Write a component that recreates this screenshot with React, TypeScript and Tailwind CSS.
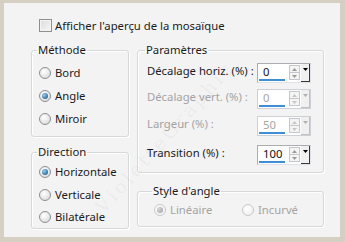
import { type FC, type ReactNode } from "react";

const FONT = "font-['Noto_Sans','Liberation_Sans',sans-serif]";

/** Win7-style radio button */
const Radio: FC<{ checked?: boolean; disabled?: boolean }> = ({ checked, disabled }) => (
  <span
    className={
      "flex h-[12px] w-[12px] shrink-0 items-center justify-center rounded-full border " +
      (disabled
        ? "border-[#c9c9c9] bg-[radial-gradient(circle_at_40%_35%,#ffffff,#ececec)]"
        : "border-[#8c8f91] bg-[radial-gradient(circle_at_40%_35%,#ffffff,#d2d4d6)]")
    }
  >
    {checked && (
      <span
        className={
          "h-[6px] w-[6px] rounded-full " +
          (disabled
            ? "bg-[radial-gradient(circle_at_35%_35%,#d8d8d8,#9a9a9a)]"
            : "bg-[radial-gradient(circle_at_35%_35%,#8fd0f5,#0d4877)]")
        }
      />
    )}
  </span>
);

const RadioRow: FC<{ label: string; checked?: boolean; disabled?: boolean; className?: string }> = ({
  label,
  checked,
  disabled,
  className = "",
}) => (
  <div className={"flex items-center gap-[4px] " + className}>
    <Radio checked={checked} disabled={disabled} />
    <span className={"whitespace-nowrap " + (disabled ? "text-[#a4a4a4]" : "text-[#1b1b1b]")}>{label}</span>
  </div>
);

const Group: FC<{ title: string; className?: string; children: ReactNode }> = ({ title, className = "", children }) => (
  <fieldset
    className={
      "rounded-[3px] border border-[#d5d9dc] shadow-[inset_1px_1px_0_#ffffff,1px_1px_0_#ffffff] " + className
    }
  >
    <legend className="-ml-[2px] px-[1px] leading-[16px] text-[#1b1b1b]">{title}</legend>
    {children}
  </fieldset>
);

/** numeric field with spin arrows, dropdown button and the blue slider bar */
const SpinField: FC<{ value: string; disabled?: boolean }> = ({ value, disabled }) => (
  <div
    className={
      "flex h-[20px] w-[54px] shrink-0 border bg-white " +
      (disabled ? "border-[#cdd0d4]" : "border-[#abadb3] border-b-[#dfe3e8] border-r-[#dfe3e8]")
    }
  >
    <div className="flex w-[30px] flex-col justify-between pb-[1px] pl-[1px]">
      <span className={"pl-[4px] pt-[1px] leading-[14px] " + (disabled ? "text-[#a4a4a4]" : "text-[#111]")}>{value}</span>
      <span className="h-[3px] w-[26px] bg-[#3d8ed6]" />
    </div>
    <div className="ml-[1px] mt-[1px] flex h-[15px] w-[11px] flex-col border border-[#c4c7cb] bg-[#f4f4f4]">
      <div className="flex flex-1 items-center justify-center border-b border-[#c4c7cb]">
        <svg width="5" height="3" viewBox="0 0 5 3">
          <path d="M0 3L2.5 0L5 3Z" fill={disabled ? "#c8c8c8" : "#9a9a9a"} />
        </svg>
      </div>
      <div className="flex flex-1 items-center justify-center">
        <svg width="5" height="3" viewBox="0 0 5 3">
          <path d="M0 0L2.5 3L5 0Z" fill={disabled ? "#c8c8c8" : "#9a9a9a"} />
        </svg>
      </div>
    </div>
    <div
      className={
        "ml-[1px] flex h-[18px] w-[9px] justify-center border-b border-r bg-[#f0f0f0] pt-[4px] " +
        (disabled ? "border-[#c0c0c0]" : "border-[#3a3a3a]")
      }
    >
      <svg width="5" height="3" viewBox="0 0 5 3">
        <path d="M0 0L2.5 3L5 0Z" fill={disabled ? "#b0b0b0" : "#000"} />
      </svg>
    </div>
  </div>
);

const ParamRow: FC<{ label: string; value: string; disabled?: boolean; className?: string }> = ({
  label,
  value,
  disabled,
  className = "",
}) => (
  <div className={"flex h-[20px] items-center justify-between " + className}>
    <span className={"-mt-[5px] whitespace-nowrap " + (disabled ? "text-[#a4a4a4]" : "text-[#1b1b1b]")}>{label}</span>
    <SpinField value={value} disabled={disabled} />
  </div>
);

export default function App() {
  return (
    <div
      className={
        "h-[242px] w-[345px] bg-[#d6cfc4] pb-[5px] pl-[4px] pr-[5px] pt-[3px] text-[11.3px] leading-[16px] " + FONT
      }
    >
      <div className="relative h-full w-full overflow-hidden bg-[#f3f3f3]">
        {/* checkbox */}
        <div className="ml-[35px] mt-[16px] flex h-[13px] items-center gap-[3px]">
          <span className="h-[13px] w-[13px] border border-[#8e8f8f] bg-[linear-gradient(135deg,#dcdcdc,#f6f6f6)] shadow-[inset_0_0_0_1px_#f4f4f4]" />
          <span className="whitespace-nowrap text-[#1b1b1b]">Afficher l'aperçu de la mosaïque</span>
        </div>

        <div className="ml-[27px] mt-[10px] flex gap-[8px]">
          {/* left column */}
          <div className="flex w-[98px] flex-col">
            <Group title="Méthode" className="pb-[6px] pl-[7px] pt-[3px]">
              <RadioRow label="Bord" className="h-[23px]" />
              <RadioRow label="Angle" checked className="h-[23px]" />
              <RadioRow label="Miroir" className="h-[23px]" />
            </Group>
            <Group title="Direction" className="mt-[7px] pb-0 pl-[7px]">
              <RadioRow label="Horizontale" checked className="h-[23px]" />
              <RadioRow label="Verticale" className="h-[23px]" />
              <RadioRow label="Bilatérale" className="h-[22px]" />
            </Group>
          </div>

          {/* right column */}
          <div className="flex w-[187px] flex-col">
            <Group title="Paramètres" className="pb-[7px] pl-[9px] pr-[12px] pt-[5px]">
              <ParamRow label="Décalage horiz. (%) :" value="0" />
              <ParamRow label="Décalage vert. (%) :" value="0" disabled className="mt-[6px]" />
              <ParamRow label="Largeur (%) :" value="50" disabled className="mt-[7px]" />
              <ParamRow label="Transition (%) :" value="100" className="mt-[9px]" />
            </Group>
            <Group title="Style d'angle" className="mt-[10px] flex pb-[6px] pl-[16px] pt-[1px]">
              <RadioRow label="Linéaire" checked disabled className="h-[20px] w-[88px]" />
              <RadioRow label="Incurvé" disabled className="h-[20px]" />
            </Group>
          </div>
        </div>

        {/* watermark */}
        <span className="pointer-events-none absolute left-[62px] top-[126px] rotate-[-48deg] whitespace-nowrap font-['DejaVu_Serif',serif] text-[19px] tracking-[3px] text-[#000000]/[0.05]">
          VioletteGraphic
        </span>
      </div>
    </div>
  );
}
